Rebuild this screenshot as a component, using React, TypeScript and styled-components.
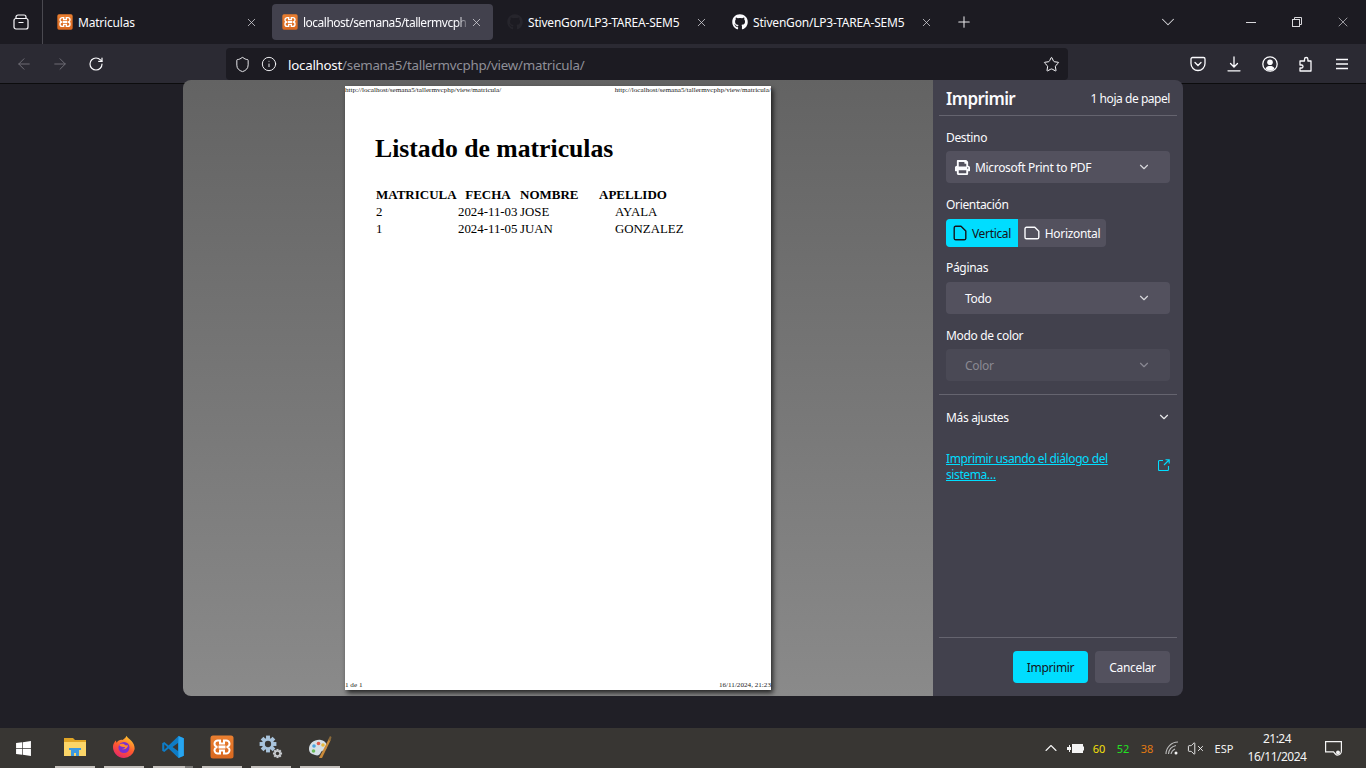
import React from "react";
import styled, { createGlobalStyle } from "styled-components";
import { ArrowLeft, ArrowRight, ChevronDown, ChevronUp, Info, Plus, RotateCw, Shield, Star, VolumeX, X } from "lucide-react";
import { FaGithub, FaPrint, FaWindows } from "react-icons/fa";

const GlobalStyle = createGlobalStyle`
    html, body {
        margin: 0;
        padding: 0;
        height: 100%;
        overflow: hidden;
        background: #1f1e25;
        font-family: "Noto Sans", "Liberation Sans", sans-serif;
    }
`;

const XamppLogo = ({ size, id }: { size: number; id: string }) => (
    <svg width={size} height={size} viewBox="0 0 24 24">
        <defs>
            <linearGradient id={id} x1="0" y1="0" x2="0" y2="1">
                <stop offset="0" stopColor="#ea7f30" />
                <stop offset="1" stopColor="#d9681f" />
            </linearGradient>
        </defs>
        <rect x="0.5" y="0.5" width="23" height="23" rx="2.5" fill={`url(#${id})`} />
        <path
            d="M10 5.500H8a3.200 3.200 0 0 0-.5 6.500 3.200 3.200 0 0 0 .5 6.500h2v-3h4v3h2a3.200 3.200 0 0 0 .5-6.500 3.200 3.200 0 0 0-.5-6.500h-2v3h-4z"
            fill="none"
            stroke="#fff"
            strokeWidth="2"
        />
        <path d="M8.500 12h7" stroke="#fff" strokeWidth="3" />
    </svg>
);

const FolderLogo = () => (
    <svg width="24" height="24" viewBox="0 0 24 24">
        <path d="M1 3h9l2 2h11v3H1z" fill="#e0a526" />
        <path d="M1 7h22v14H1z" fill="#fbd568" />
        <path d="M8 21v-6h8v6h-3v-3h-2v3z" fill="#3d9ae0" />
        <path d="M6 13h12v2H6z" fill="#3d9ae0" />
    </svg>
);

const FirefoxLogo = () => (
    <svg width="24" height="24" viewBox="0 0 24 24">
        <defs>
            <linearGradient id="fx" x1="0.7" y1="0" x2="0.2" y2="1">
                <stop offset="0" stopColor="#ffc82e" />
                <stop offset="0.5" stopColor="#ff5a2e" />
                <stop offset="1" stopColor="#e3226f" />
            </linearGradient>
        </defs>
        <path
            d="M12 23A11 11 0 0 1 1.200 10C2 8 2.600 6.500 4 5.500c0 1 .2 1.600.8 2.200C6 5.500 8.500 4.500 10.500 5 12.500 4 14 2.500 14.500.8c.6 2 3 3 5 5.200 2.500 2.700 3.500 6 3 8.500A11 11 0 0 1 12 23z"
            fill="url(#fx)"
        />
        <circle cx="12" cy="12.500" r="5.500" fill="#7b2fd0" />
        <path d="M7 10c3-2 5-1 6 0 1 1 3 0 3 0 0 3-3 5-6 4 2 0 3-1 3-2-2 0-4 0-6-2z" fill="#ff8a2e" />
    </svg>
);

const VsCodeLogo = () => (
    <svg width="24" height="24" viewBox="0 0 24 24">
        <path d="M17.500 1 7.600 10.400 3.300 7.100 1.200 8.200v7.600l2.100 1.100 4.300-3.300L17.500 23l5.300-2.200V3.200zM3.300 14.800V9.200L6.200 12zM17.300 16.300 11.600 12l5.700-4.300z" fill="#0e7cc6" />
        <path d="M17.500 1 22.800 3.200v17.600L17.500 23l-.2-6.700V7.700z" fill="#27a5f0" />
    </svg>
);

const GearShape = ({ cx, cy, r, fill }: { cx: number; cy: number; r: number; fill: string }) => (
    <g>
        {[0, 45, 90, 135].map((angle) => (
            <rect
                key={angle}
                x={cx - r * 0.28}
                y={cy - r * 1.2}
                width={r * 0.56}
                height={r * 2.4}
                fill={fill}
                transform={`rotate(${angle} ${cx} ${cy})`}
            />
        ))}
        <circle cx={cx} cy={cy} r={r * 0.85} fill={fill} />
        <circle cx={cx} cy={cy} r={r * 0.45} fill="#383633" />
    </g>
);

const GearsLogo = () => (
    <svg width="24" height="24" viewBox="0 0 24 24">
        <GearShape cx={9} cy={9} r={7} fill="#a9c4dc" />
        <GearShape cx={18.5} cy={18.5} r={3.8} fill="#c9ccd0" />
    </svg>
);

const PaintLogo = () => (
    <svg width="24" height="24" viewBox="0 0 24 24">
        <path d="M1 14C1 8 7 4 13 5c5 1 7 5 5 9-1 2-4 1-5 3-1 3-3 4-6 3-3-1-6-2-6-6z" fill="#d5dfe6" />
        <circle cx="6" cy="11" r="1.800" fill="#4aa3df" />
        <circle cx="10.500" cy="8.500" r="1.800" fill="#e05a4a" />
        <circle cx="15" cy="10" r="1.800" fill="#e8b93a" />
        <circle cx="5.500" cy="16" r="1.800" fill="#6cbb5a" />
        <path d="M11 23 20.500 4.500l2 1L14 23z" fill="#c98a3a" />
        <path d="M20 5l2-4 1.500 1-1 4z" fill="#8a6a3a" />
    </svg>
);

const FirefoxViewIcon = () => (
    <svg width="16" height="16" viewBox="0 0 16 16" fill="none" stroke="#fbfbfe" strokeWidth="1.200">
        <rect x="1" y="4.500" width="14" height="10.500" rx="2" />
        <path d="M3 4.500V3a2 2 0 0 1 2-2h6a2 2 0 0 1 2 2v1.500M5.500 8.500h5" />
    </svg>
);

const PocketIcon = () => (
    <svg width="16" height="16" viewBox="0 0 16 16" fill="none" stroke="#fbfbfe" strokeWidth="1.300">
        <path d="M2.500 1.500h11A1.500 1.500 0 0 1 15 3v4.500a7 7 0 0 1-14 0V3a1.500 1.500 0 0 1 1.500-1.500z" />
        <path d="M5 6.500l3 3 3-3" strokeLinecap="round" />
    </svg>
);

const DownloadIcon = () => (
    <svg width="16" height="16" viewBox="0 0 16 16" fill="none" stroke="#fbfbfe" strokeWidth="1.300" strokeLinecap="round">
        <path d="M8 1v9.500M4.500 7.500 8 11l3.500-3.500M2 14.800h12" />
    </svg>
);

const AccountIcon = () => (
    <svg width="16" height="16" viewBox="0 0 16 16">
        <circle cx="8" cy="8" r="7.200" fill="none" stroke="#fbfbfe" strokeWidth="1.300" />
        <circle cx="8" cy="6.300" r="2.800" fill="#fbfbfe" />
        <path d="M3.500 12.500C4.500 10.500 6 10 8 10s3.500.5 4.500 2.500C11.500 14 10 14.500 8 14.500S4.500 14 3.500 12.500z" fill="#fbfbfe" />
    </svg>
);

const ExtensionIcon = () => (
    <svg width="16" height="16" viewBox="0 0 16 16" fill="none" stroke="#fbfbfe" strokeWidth="1.300" strokeLinejoin="round">
        <path d="M2 15v-3h1.500a1.500 1.500 0 0 0 0-3H2V5h4.500V3.200a1.700 1.700 0 0 1 3.400 0V5H13v10z" />
    </svg>
);

const HamburgerIcon = () => (
    <svg width="16" height="16" viewBox="0 0 16 16" stroke="#fbfbfe" strokeWidth="1.400">
        <path d="M2 3.500h12M2 8h12M2 12.500h12" />
    </svg>
);

const RestoreIcon = () => (
    <svg width="10" height="10" viewBox="0 0 10 10" fill="none" stroke="#d8d8dc" strokeWidth="1">
        <rect x="0.500" y="2.500" width="7" height="7" />
        <path d="M2.500 2.500v-2h7v7h-2" />
    </svg>
);

const MinimizeIcon = () => (
    <svg width="10" height="10" viewBox="0 0 10 10" stroke="#d8d8dc" strokeWidth="1">
        <path d="M0 5.500h10" />
    </svg>
);

const PortraitIcon = ({ color }: { color: string }) => (
    <svg width="14" height="16" viewBox="0 0 14 16" fill="none" stroke={color} strokeWidth="1.400" strokeLinejoin="round">
        <path d="M2.500 1.200h5.500l4.800 4.800v7.500a1.500 1.500 0 0 1-1.500 1.300H2.700a1.500 1.500 0 0 1-1.500-1.300V2.700a1.500 1.500 0 0 1 1.300-1.500z" />
    </svg>
);

const LandscapeIcon = ({ color }: { color: string }) => (
    <svg width="16" height="14" viewBox="0 0 16 14" fill="none" stroke={color} strokeWidth="1.400" strokeLinejoin="round">
        <path d="M2.500 1.200h8.300l4 4v6a1.600 1.600 0 0 1-1.600 1.600H2.500A1.600 1.600 0 0 1 1 11.200V2.700a1.500 1.500 0 0 1 1.500-1.500z" />
    </svg>
);

const ExternalIcon = () => (
    <svg width="12" height="12" viewBox="0 0 12 12" fill="none" stroke="#00ddff" strokeWidth="1.100">
        <path d="M5 1.500H1.500a1 1 0 0 0-1 1v8a1 1 0 0 0 1 1h8a1 1 0 0 0 1-1V7M6 6l5-5M7.500 .8h3.700v3.700" />
    </svg>
);

const BatteryIcon = () => (
    <svg width="17" height="11" viewBox="0 0 17 11">
        <path d="M0 4h2V2h1v2h1v3H3v2H2V7H0z" fill="#f4f4f4" />
        <rect x="5.500" y="1.500" width="10" height="8" fill="#f4f4f4" stroke="#f4f4f4" />
        <rect x="16" y="3.500" width="1" height="4" fill="#f4f4f4" />
    </svg>
);

const WifiIcon = () => (
    <svg width="14" height="14" viewBox="0 0 14 14" fill="none" stroke="#bdbdbd" strokeWidth="1.100">
        <path d="M1 13A12 12 0 0 1 13 1M3.500 13A9.500 9.500 0 0 1 11 4.500M6 13a7 7 0 0 1 4-5" />
        <circle cx="11" cy="12" r="1.500" fill="#f4f4f4" stroke="none" />
    </svg>
);

const NotificationIcon = () => (
    <svg width="17" height="15" viewBox="0 0 17 15" fill="none" stroke="#f4f4f4" strokeWidth="1.200">
        <path d="M.6.600h15.800v9.500c0 2-1.500 4-4 4-1 0-1.500-.5-2-1.100L8.500 10.800H.6z" />
        <circle cx="13" cy="11.500" r="2" fill="#f4f4f4" stroke="none" />
    </svg>
);

const TabsData = [
    { title: "Matriculas", logo: "xampp", active: false },
    { title: "localhost/semana5/tallermvcph", logo: "xampp", active: true },
    { title: "StivenGon/LP3-TAREA-SEM5", logo: "ghDark", active: false },
    { title: "StivenGon/LP3-TAREA-SEM5", logo: "gh", active: false },
];

const TaskbarApps = [
    { name: "explorer", icon: <FolderLogo /> },
    { name: "firefox", icon: <FirefoxLogo /> },
    { name: "vscode", icon: <VsCodeLogo />, split: true },
    { name: "xampp", icon: <XamppLogo size={24} id="xampp-bar" /> },
    { name: "settings", icon: <GearsLogo /> },
    { name: "paint", icon: <PaintLogo /> },
];

const Matriculas = [
    { id: 2, date: "2024-11-03", name: "JOSE", lastName: "AYALA" },
    { id: 1, date: "2024-11-05", name: "JUAN", lastName: "GONZALEZ" },
];

const PAGE_URL = "http://localhost/semana5/tallermvcphp/view/matricula/";

export default function App() {
    return (
        <Screen>
            <GlobalStyle />

            <TabBar>
                <ViewButton>
                    <FirefoxViewIcon />
                </ViewButton>
                <TabStrip>
                    {TabsData.map((tab, idx) => (
                        <Tab key={idx} $active={tab.active}>
                            <Favicon>
                                {tab.logo === "xampp" && <XamppLogo size={16} id={`xampp-tab-${idx}`} />}
                                {tab.logo === "gh" && <FaGithub size={16} color="#fbfbfe" />}
                                {tab.logo === "ghDark" && <FaGithub size={16} color="#26252c" />}
                            </Favicon>
                            <TabTitle $fade={tab.active}>{tab.title}</TabTitle>
                            <X size={13} strokeWidth={1.4} color="#d8d8dc" />
                        </Tab>
                    ))}
                    <NewTab>
                        <Plus size={18} strokeWidth={1.4} color="#e8e8ea" />
                    </NewTab>
                </TabStrip>
                <TabListButton>
                    <ChevronDown size={22} strokeWidth={1.1} color="#d8d8dc" />
                </TabListButton>
                <WindowButton>
                    <MinimizeIcon />
                </WindowButton>
                <WindowButton>
                    <RestoreIcon />
                </WindowButton>
                <WindowButton>
                    <X size={16} strokeWidth={1} color="#d8d8dc" />
                </WindowButton>
            </TabBar>

            <NavBar>
                <NavButton>
                    <ArrowLeft size={18} strokeWidth={1.3} color="#6f6e76" />
                </NavButton>
                <NavButton>
                    <ArrowRight size={18} strokeWidth={1.3} color="#6f6e76" />
                </NavButton>
                <NavButton>
                    <RotateCw size={16} strokeWidth={1.8} color="#fbfbfe" />
                </NavButton>
                <UrlBar>
                    <Shield size={17} strokeWidth={1.3} color="#fbfbfe" />
                    <Info size={16} strokeWidth={1.4} color="#fbfbfe" />
                    <UrlText>
                        <UrlHost>localhost</UrlHost>/semana5/tallermvcphp/view/matricula/
                    </UrlText>
                    <Star size={17} strokeWidth={1.4} color="#fbfbfe" />
                </UrlBar>
                <NavTools>
                    <PocketIcon />
                    <DownloadIcon />
                    <AccountIcon />
                    <ExtensionIcon />
                    <HamburgerIcon />
                </NavTools>
            </NavBar>

            <Main>
                <Dialog>
                    <Preview>
                        <Paper>
                            <PaperHeader>
                                <span>{PAGE_URL}</span>
                                <span>{PAGE_URL}</span>
                            </PaperHeader>
                            <PaperBody>
                                <PaperTitle>Listado de matriculas</PaperTitle>
                                <PaperTable>
                                    <colgroup>
                                        <col width={82} />
                                        <col width={62} />
                                        <col width={79} />
                                        <col width={90} />
                                    </colgroup>
                                    <thead>
                                        <tr>
                                            <HeadCell>MATRICULA</HeadCell>
                                            <HeadCell $align="center">FECHA</HeadCell>
                                            <HeadCell>NOMBRE</HeadCell>
                                            <HeadCell>APELLIDO</HeadCell>
                                        </tr>
                                    </thead>
                                    <tbody>
                                        {Matriculas.map((el) => (
                                            <tr key={el.id}>
                                                <BodyCell>{el.id}</BodyCell>
                                                <BodyCell>{el.date}</BodyCell>
                                                <BodyCell>{el.name}</BodyCell>
                                                <LastNameCell>{el.lastName}</LastNameCell>
                                            </tr>
                                        ))}
                                    </tbody>
                                </PaperTable>
                            </PaperBody>
                            <PaperFooter>
                                <span>1 de 1</span>
                                <span>16/11/2024, 21:23</span>
                            </PaperFooter>
                        </Paper>
                    </Preview>

                    <Sidebar>
                        <SideHeader>
                            <SideTitle>Imprimir</SideTitle>
                            <SheetCount>1 hoja de papel</SheetCount>
                        </SideHeader>

                        <SideForm>
                            <FieldLabel>Destino</FieldLabel>
                            <SelectBox>
                                <SelectValue>
                                    <FaPrint size={15} color="#fbfbfe" />
                                    Microsoft Print to PDF
                                </SelectValue>
                                <ChevronDown size={14} strokeWidth={2} color="#d8d8dc" />
                            </SelectBox>

                            <FieldLabel>Orientación</FieldLabel>
                            <ToggleGroup>
                                <ToggleItem $active $width={72}>
                                    <PortraitIcon color="#15141a" />
                                    Vertical
                                </ToggleItem>
                                <ToggleItem $width={88}>
                                    <LandscapeIcon color="#fbfbfe" />
                                    Horizontal
                                </ToggleItem>
                            </ToggleGroup>

                            <FieldLabel>Páginas</FieldLabel>
                            <SelectBox $indent>
                                <SelectValue>Todo</SelectValue>
                                <ChevronDown size={14} strokeWidth={2} color="#d8d8dc" />
                            </SelectBox>

                            <FieldLabel>Modo de color</FieldLabel>
                            <SelectBox $indent $disabled>
                                <SelectValue>Color</SelectValue>
                                <ChevronDown size={14} strokeWidth={2} color="#8a8993" />
                            </SelectBox>
                        </SideForm>

                        <MoreRow>
                            <span>Más ajustes</span>
                            <ChevronDown size={14} strokeWidth={2} color="#e8e8ea" />
                        </MoreRow>

                        <SystemRow>
                            <SystemLink>Imprimir usando el diálogo del sistema…</SystemLink>
                            <ExternalIcon />
                        </SystemRow>

                        <SideFooter>
                            <FooterButton $primary>Imprimir</FooterButton>
                            <FooterButton>Cancelar</FooterButton>
                        </SideFooter>
                    </Sidebar>
                </Dialog>
            </Main>

            <Taskbar>
                <StartButton>
                    <FaWindows size={17} color="#fff" />
                </StartButton>
                <AppList>
                    {TaskbarApps.map((app) => (
                        <AppButton key={app.name} $split={app.split}>
                            {app.icon}
                        </AppButton>
                    ))}
                </AppList>
                <Tray>
                    <TraySlot $width={24}>
                        <ChevronUp size={20} strokeWidth={1.3} color="#f4f4f4" />
                    </TraySlot>
                    <TraySlot $width={24}>
                        <BatteryIcon />
                    </TraySlot>
                    <TraySlot $width={24}>
                        <TrayNumber $color="#f5e00a">60</TrayNumber>
                    </TraySlot>
                    <TraySlot $width={24}>
                        <TrayNumber $color="#22e322">52</TrayNumber>
                    </TraySlot>
                    <TraySlot $width={24}>
                        <TrayNumber $color="#e27a12">38</TrayNumber>
                    </TraySlot>
                    <TraySlot $width={25}>
                        <WifiIcon />
                    </TraySlot>
                    <TraySlot $width={22}>
                        <VolumeX size={17} strokeWidth={1.3} color="#f4f4f4" />
                    </TraySlot>
                    <TraySlot $width={36}>
                        <TrayLang>ESP</TrayLang>
                    </TraySlot>
                    <TraySlot $width={70}>
                        <Clock>
                            <span>21:24</span>
                            <span>16/11/2024</span>
                        </Clock>
                    </TraySlot>
                    <TraySlot $width={42}>
                        <NotificationIcon />
                    </TraySlot>
                </Tray>
            </Taskbar>
        </Screen>
    );
}

const Screen = styled.div`
    width: 1366px;
    height: 768px;
    display: flex;
    flex-direction: column;
    overflow: hidden;
`;

const TabBar = styled.div`
    height: 44px;
    flex: none;
    display: flex;
    align-items: center;
    background: #1c1b22;
`;

const ViewButton = styled.div`
    width: 42px;
    height: 44px;
    flex: none;
    display: flex;
    align-items: center;
    justify-content: center;
    border-right: 1px solid #4a4950;
`;

const TabStrip = styled.div`
    flex: 1;
    display: flex;
    align-items: center;
    gap: 4px;
    padding-left: 4px;
`;

const Tab = styled.div<{ $active: boolean }>`
    width: 221px;
    height: 36px;
    box-sizing: border-box;
    display: flex;
    align-items: center;
    gap: 5px;
    padding: 0 10px;
    border-radius: 4px;
    color: #fbfbfe;
    font-size: 12px;
    letter-spacing: -0.2px;
    background: ${(props) => (props.$active ? "#42414d" : "transparent")};
`;

const Favicon = styled.span`
    width: 16px;
    height: 16px;
    flex: none;
    display: flex;
    align-items: center;
    justify-content: center;
`;

const TabTitle = styled.span<{ $fade: boolean }>`
    flex: 1;
    min-width: 0;
    overflow: hidden;
    white-space: nowrap;
    ${(props) =>
        props.$fade &&
        `
        letter-spacing: -0.5px;
        margin-right: -4px;
        -webkit-mask-image: linear-gradient(to right, #000 93%, transparent 100%);
        mask-image: linear-gradient(to right, #000 93%, transparent 100%);
    `}
`;

const NewTab = styled.div`
    width: 24px;
    height: 24px;
    margin-left: 5px;
    display: flex;
    align-items: center;
    justify-content: center;
`;

const TabListButton = styled.div`
    width: 36px;
    margin-right: 42px;
    display: flex;
    justify-content: center;
`;

const WindowButton = styled.div`
    width: 46px;
    height: 44px;
    display: flex;
    align-items: center;
    justify-content: center;
`;

const NavBar = styled.div`
    height: 40px;
    flex: none;
    display: flex;
    align-items: flex-start;
    box-sizing: border-box;
    padding: 4px 0 0 6px;
    background: #2b2a33;
    border-bottom: 1px solid #0c0c0d;
`;

const NavButton = styled.div`
    width: 36px;
    height: 32px;
    display: flex;
    align-items: center;
    justify-content: center;
`;

const UrlBar = styled.div`
    width: 842px;
    height: 32px;
    margin-left: 112px;
    box-sizing: border-box;
    display: flex;
    align-items: center;
    gap: 10px;
    padding: 0 8px;
    border-radius: 4px;
    background: #1c1b22;
`;

const UrlText = styled.div`
    flex: 1;
    margin-left: 1px;
    padding-top: 1px;
    font-size: 13.33px;
    letter-spacing: -0.25px;
    color: #8f8f98;
`;

const UrlHost = styled.span`
    color: #fbfbfe;
`;

const NavTools = styled.div`
    height: 32px;
    margin-left: 122px;
    display: flex;
    align-items: center;
    gap: 20px;
`;

const Main = styled.div`
    flex: 1;
    min-height: 0;
    display: flex;
    justify-content: center;
    align-items: flex-start;
    background: #201f26;
`;

const Dialog = styled.div`
    width: 1000px;
    height: 616px;
    margin-top: -4px;
    display: flex;
    border-radius: 8px;
    overflow: hidden;
    position: relative;
`;

const Preview = styled.div`
    flex: 1;
    display: flex;
    justify-content: center;
    padding-top: 6px;
    box-sizing: border-box;
    background: linear-gradient(to bottom, #636363, #8a8a8a);
`;

const Paper = styled.div`
    width: 426px;
    height: 604px;
    display: flex;
    flex-direction: column;
    background: #fff;
    box-shadow: 2px 3px 5px rgba(0, 0, 0, 0.75);
    font-family: "Liberation Serif", serif;
    color: #000;
`;

const PaperHeader = styled.div`
    display: flex;
    justify-content: space-between;
    font-size: 7.15px;
    line-height: 8px;
    height: 8px;
    white-space: nowrap;
    color: #222;
`;

const PaperBody = styled.div`
    flex: 1;
    padding: 40px 0 0 30px;
`;

const PaperTitle = styled.h1`
    margin: 0 0 22px;
    font-size: 25.7px;
    line-height: 30px;
    font-weight: bold;
`;

const PaperTable = styled.table`
    border-collapse: collapse;
    table-layout: fixed;
    width: 313px;
    font-size: 13px;
`;

const HeadCell = styled.th<{ $align?: string }>`
    padding: 1px;
    height: 16px;
    text-align: ${(props) => props.$align || "left"};
    white-space: nowrap;
`;

const BodyCell = styled.td`
    padding: 1px;
    height: 15px;
    font-size: 12.85px;
    white-space: nowrap;
`;

const LastNameCell = styled(BodyCell)`
    padding-left: 17px;
`;

const PaperFooter = styled(PaperHeader)`
    margin-bottom: 1px;
`;

const Sidebar = styled.div`
    width: 250px;
    flex: none;
    display: flex;
    flex-direction: column;
    box-sizing: border-box;
    background: #42414d;
    color: #fbfbfe;
    font-size: 12px;
    letter-spacing: -0.33px;
`;

const SideHeader = styled.div`
    height: 36px;
    margin: 0 6px;
    padding: 1px 7px 0;
    box-sizing: border-box;
    display: flex;
    align-items: center;
    justify-content: space-between;
    border-bottom: 1px solid #65646f;
`;

const SideTitle = styled.div`
    font-size: 17px;
    font-weight: 600;
    letter-spacing: -0.6px;
`;

const SheetCount = styled.div`
    font-size: 12px;
    letter-spacing: -0.45px;
`;

const SideForm = styled.div`
    display: flex;
    flex-direction: column;
    padding: 14px 7px 13px;
    border-bottom: 1px solid #65646f;
    margin: 0 6px;
`;

const FieldLabel = styled.div`
    height: 16px;
    line-height: 16px;
    margin-bottom: 6px;
    font-size: 12px;

    &:first-child {
        margin-bottom: 5px;
    }
`;

const SelectBox = styled.div<{ $indent?: boolean; $disabled?: boolean }>`
    height: 32px;
    margin-top: ${(props) => (props.$disabled ? "-1px" : "0")};
    margin-bottom: 14px;
    box-sizing: border-box;
    display: flex;
    align-items: center;
    justify-content: space-between;
    padding: 0 19px 0 ${(props) => (props.$indent ? "19px" : "9px")};
    border-radius: 4px;
    background: ${(props) => (props.$disabled ? "#4a4955" : "#53515e")};
    color: ${(props) => (props.$disabled ? "#8a8993" : "#fbfbfe")};

    &:last-child {
        margin-bottom: 0;
    }
`;

const SelectValue = styled.div`
    display: flex;
    align-items: center;
    gap: 5px;
    font-size: 12px;
`;

const ToggleGroup = styled.div`
    display: flex;
    height: 28px;
    margin-bottom: 13px;
    align-self: flex-start;
    border-radius: 4px;
    overflow: hidden;
    background: #53515e;
`;

const ToggleItem = styled.div<{ $active?: boolean; $width: number }>`
    width: ${(props) => props.$width}px;
    box-sizing: border-box;
    display: flex;
    align-items: center;
    justify-content: center;
    gap: 5px;
    font-size: 12px;
    color: ${(props) => (props.$active ? "#15141a" : "#fbfbfe")};
    background: ${(props) => (props.$active ? "#00ddff" : "transparent")};
`;

const MoreRow = styled.div`
    height: 44px;
    padding: 0 12px 0 13px;
    display: flex;
    align-items: center;
    justify-content: space-between;
`;

const SystemRow = styled.div`
    display: flex;
    align-items: center;
    justify-content: space-between;
    padding: 12px 13px 0;

    svg {
        margin-top: -5px;
    }
`;

const SystemLink = styled.a`
    width: 180px;
    line-height: 16px;
    letter-spacing: -0.4px;
    color: #00ddff;
    text-decoration: underline;
`;

const SideFooter = styled.div`
    margin: auto 6px 0;
    height: 59px;
    box-sizing: border-box;
    padding: 13px 7px 0 0;
    display: flex;
    justify-content: flex-end;
    gap: 7px;
    border-top: 1px solid #65646f;
`;

const FooterButton = styled.div<{ $primary?: boolean }>`
    width: 75px;
    height: 32px;
    display: flex;
    align-items: center;
    justify-content: center;
    border-radius: 4px;
    font-size: 12px;
    color: ${(props) => (props.$primary ? "#15141a" : "#fbfbfe")};
    background: ${(props) => (props.$primary ? "#00ddff" : "#53515e")};
`;

const Taskbar = styled.div`
    height: 40px;
    flex: none;
    display: flex;
    align-items: center;
    background: #383633;
`;

const StartButton = styled.div`
    width: 47px;
    height: 40px;
    margin-right: 6px;
    display: flex;
    align-items: center;
    justify-content: center;
`;

const AppList = styled.div`
    display: flex;
    gap: 9px;
    margin-left: 2px;
`;

const AppButton = styled.div<{ $split?: boolean }>`
    width: 40px;
    height: 40px;
    box-sizing: border-box;
    display: flex;
    align-items: center;
    justify-content: center;
    border-bottom: 2px solid #c4c0bc;
    ${(props) => props.$split && "border-image: linear-gradient(to right, #c4c0bc 78%, #7d7b78 78%) 1;"}
`;

const Tray = styled.div`
    margin-left: auto;
    height: 40px;
    display: flex;
    align-items: center;
    color: #f4f4f4;
    padding-right: 12px;
`;

const TraySlot = styled.div<{ $width: number }>`
    width: ${(props) => props.$width}px;
    display: flex;
    justify-content: center;
    align-items: center;
`;

const TrayNumber = styled.span<{ $color: string }>`
    font-size: 11px;
    color: ${(props) => props.$color};
`;

const TrayLang = styled.span`
    font-size: 11px;
`;

const Clock = styled.div`
    display: flex;
    flex-direction: column;
    align-items: center;
    font-size: 12px;
    line-height: 18px;
    letter-spacing: -0.5px;
`;
